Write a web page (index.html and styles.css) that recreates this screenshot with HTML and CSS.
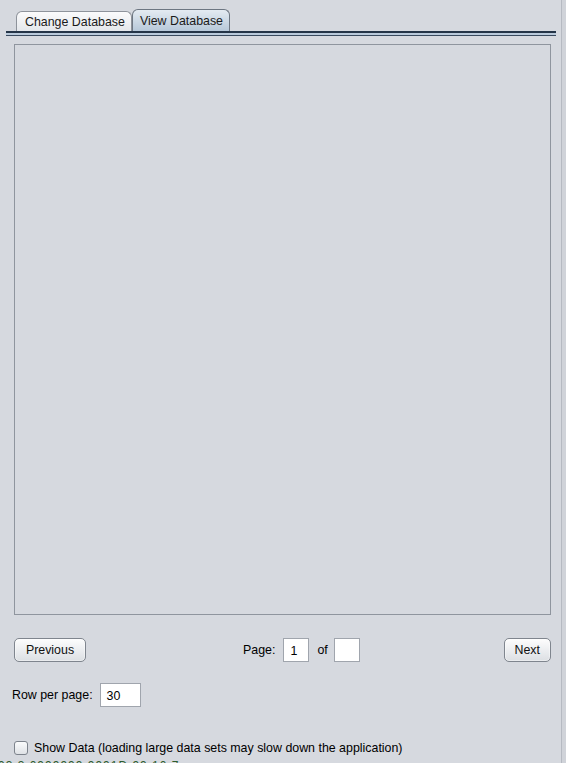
FILE: index.html
```html
<!DOCTYPE html>
<html>
<head>
<meta charset="utf-8">
<link rel="stylesheet" href="styles.css">
</head>
<body>
<div class="window">
  <div class="tabbar">
    <div class="tab">Change Database</div>
    <div class="tab active">View Database</div>
  </div>
  <div class="tabline"></div>
  <div class="content">
    <div class="viewport"></div>
    <div class="pager">
      <button class="btn">Previous</button>
      <div class="pageinfo">
        <span class="lbl">Page:</span>
        <div class="field small">1</div>
        <span class="lbl of">of</span>
        <div class="field small"></div>
      </div>
      <button class="btn">Next</button>
    </div>
    <div class="rows">
      <span class="lbl">Row per page:</span>
      <div class="field wide">30</div>
    </div>
    <label class="check">
      <span class="box"></span>
      <span>Show Data (loading large data sets may slow down the application)</span>
    </label>
  </div>
  <div class="cutoff">93 3 0999999 9991D 99 10 7</div>
</div>
</body>
</html>
```
FILE: styles.css
```css
html, body {
  margin: 0;
  padding: 0;
  height: 100%;
  overflow: hidden;
}
body {
  background: #d6d9df;
  font-family: "Liberation Sans", Arial, sans-serif;
  font-size: 12.4px;
  color: #000;
}
.window {
  position: relative;
  height: 763px;
  border-right: 4px solid #d0d3d9;
  box-sizing: border-box;
  width: 566px;
}
.window::after {
  content: "";
  position: absolute;
  top: 0;
  bottom: 0;
  right: 0;
  width: 1px;
  background: #b6bac2;
}
.tabbar {
  display: flex;
  align-items: flex-end;
  padding: 9px 0 0 16px;
  height: 22px;
}
.tab {
  height: 20px;
  box-sizing: border-box;
  padding: 3px 6px 0 8px;
  border: 1px solid #8e939b;
  border-bottom: none;
  border-radius: 6px 6px 0 0;
  background: linear-gradient(#fbfbfc, #e4e7eb);
  color: #1a1a1a;
  white-space: nowrap;
}
.tab.active {
  height: 22px;
  padding: 4px 6px 0 7px;
  margin-left: 0;
  background: linear-gradient(#e4ebf2, #b7c8d9);
  border-color: #6d7682;
}
.tabline {
  margin: 0 6px 0 6px;
  height: 1px;
  border-top: 2px solid #243447;
  border-bottom: 1px solid #3a4a5e;
  background: #b9c9da;
  padding-top: 1px;
}
.content {
  padding: 8px 11px 0 14px;
}
.viewport {
  height: 569px;
  border: 1px solid #8f959e;
  background: #d6d9df;
}
.pager {
  display: flex;
  align-items: center;
  justify-content: space-between;
  margin-top: 22px;
  height: 25px;
}
.btn {
  font-family: "Liberation Sans", Arial, sans-serif;
  font-size: 12.4px;
  color: #111;
  height: 24px;
  padding: 0 10px;
  border: 1px solid #7f858e;
  border-radius: 5px;
  background: linear-gradient(#fdfdfd, #e9ebee 60%, #dcdfe3);
  box-shadow: inset 0 0 0 1px #ffffff66;
}
.btn:first-child {
  width: 72px;
}
.pageinfo {
  display: flex;
  align-items: center;
  margin-left: 157px;
  flex: 1;
}
.lbl {
  white-space: nowrap;
}
.field {
  height: 24px;
  box-sizing: border-box;
  border: 1px solid #a0a5ad;
  background: #fff;
  padding: 5px 0 0 6px;
}
.field.small {
  width: 26px;
  margin-left: 8px;
}
.of {
  margin-left: 8px;
  margin-right: -2px;
}
.rows {
  display: flex;
  align-items: center;
  margin-top: 21px;
  margin-left: -2px;
}
.field.wide {
  width: 41px;
  margin-left: 7px;
}
.check {
  display: flex;
  align-items: center;
  margin-top: 34px;
  gap: 6px;
}
.box {
  width: 14px;
  height: 14px;
  box-sizing: border-box;
  border: 1px solid #7d838c;
  border-radius: 3px;
  background: linear-gradient(#fafbfc, #dfe2e6);
}
.cutoff {
  position: absolute;
  left: -2px;
  top: 759px;
  font-size: 12px;
  line-height: 14px;
  color: #2d5c2d;
  white-space: nowrap;
  letter-spacing: 1px;
}
```
